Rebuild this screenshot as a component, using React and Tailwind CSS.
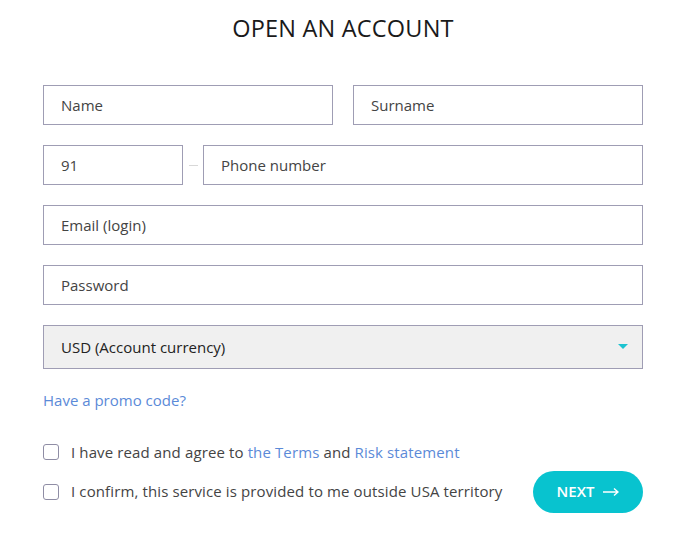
import React, { useState } from 'react'

const font = { fontFamily: '"Open Sans", "Noto Sans", Arial, sans-serif' }

const Field = ({ placeholder, defaultValue, className = '' }) => (
    <input
        className={`h-10 border border-[#9f9db4] bg-white px-[17px] text-[15px] text-[#444] placeholder:text-[#444] outline-none ${className}`}
        placeholder={placeholder}
        defaultValue={defaultValue}
    />
)

const Check = ({ children }) => (
    <label className="flex items-center gap-3 text-[15px] text-[#444] tracking-[0.12px]">
        <span className="w-4 h-4 border border-[#8f8da5] rounded-[3px] bg-white shrink-0"></span>
        <span>{children}</span>
    </label>
)

export default function App() {
    const [currency] = useState('USD (Account currency)')

    return (
        <div className="w-[684px] h-[538px] bg-white" style={font}>
            <div className="ml-[43px] w-[600px] pt-[10px]">
                <h1 className="text-center text-[23.5px] leading-[36px] text-[#1a1a1a] tracking-[0.2px]">OPEN AN ACCOUNT</h1>

                <form className="flex flex-col gap-5 mt-[39px]">
                    <div className="flex gap-5">
                        <Field placeholder="Name" className="w-[290px]" />
                        <Field placeholder="Surname" className="w-[290px]" />
                    </div>

                    <div className="flex items-center">
                        <Field defaultValue="91" className="w-[140px]" />
                        <div className="w-5 flex justify-center">
                            <span className="w-[9px] h-px bg-[#d8d8d8]"></span>
                        </div>
                        <Field placeholder="Phone number" className="flex-1" />
                    </div>

                    <Field placeholder="Email (login)" className="w-full" />
                    <Field placeholder="Password" className="w-full" />

                    <div className="h-11 border border-[#9f9db4] bg-[#f0f0f0] flex items-center justify-between px-[17px]">
                        <span className="text-[15px] text-[#222]">{currency}</span>
                        <svg width="10" height="6" viewBox="0 0 10 6" className="mr-[-3px]">
                            <path d="M0 0 L10 0 L5 5 Z" fill="#1cc3d0" />
                        </svg>
                    </div>
                </form>

                <a className="block mt-[21px] text-[15px] text-[#5b8ad8] leading-5">Have a promo code?</a>

                <div className="flex flex-col mt-[31px]">
                    <Check>
                        I have read and agree to <span className="text-[#5b8ad8]">the Terms</span> and <span className="text-[#5b8ad8]">Risk statement</span>
                    </Check>
                    <div className="flex items-center justify-between mt-[7px]">
                        <Check>I confirm, this service is provided to me outside USA territory</Check>
                        <button className="w-[110px] h-[42px] rounded-full bg-[#08c3cf] text-white text-[15px] font-semibold flex items-center justify-center gap-[9px]">
                            <span>NEXT</span>
                            <svg width="16" height="10" viewBox="0 0 16 10" fill="none" stroke="white" strokeWidth="1.4">
                                <path d="M0 5 H15 M11 1.5 L15 5 L11 8.5" />
                            </svg>
                        </button>
                    </div>
                </div>
            </div>
        </div>
    )
}
